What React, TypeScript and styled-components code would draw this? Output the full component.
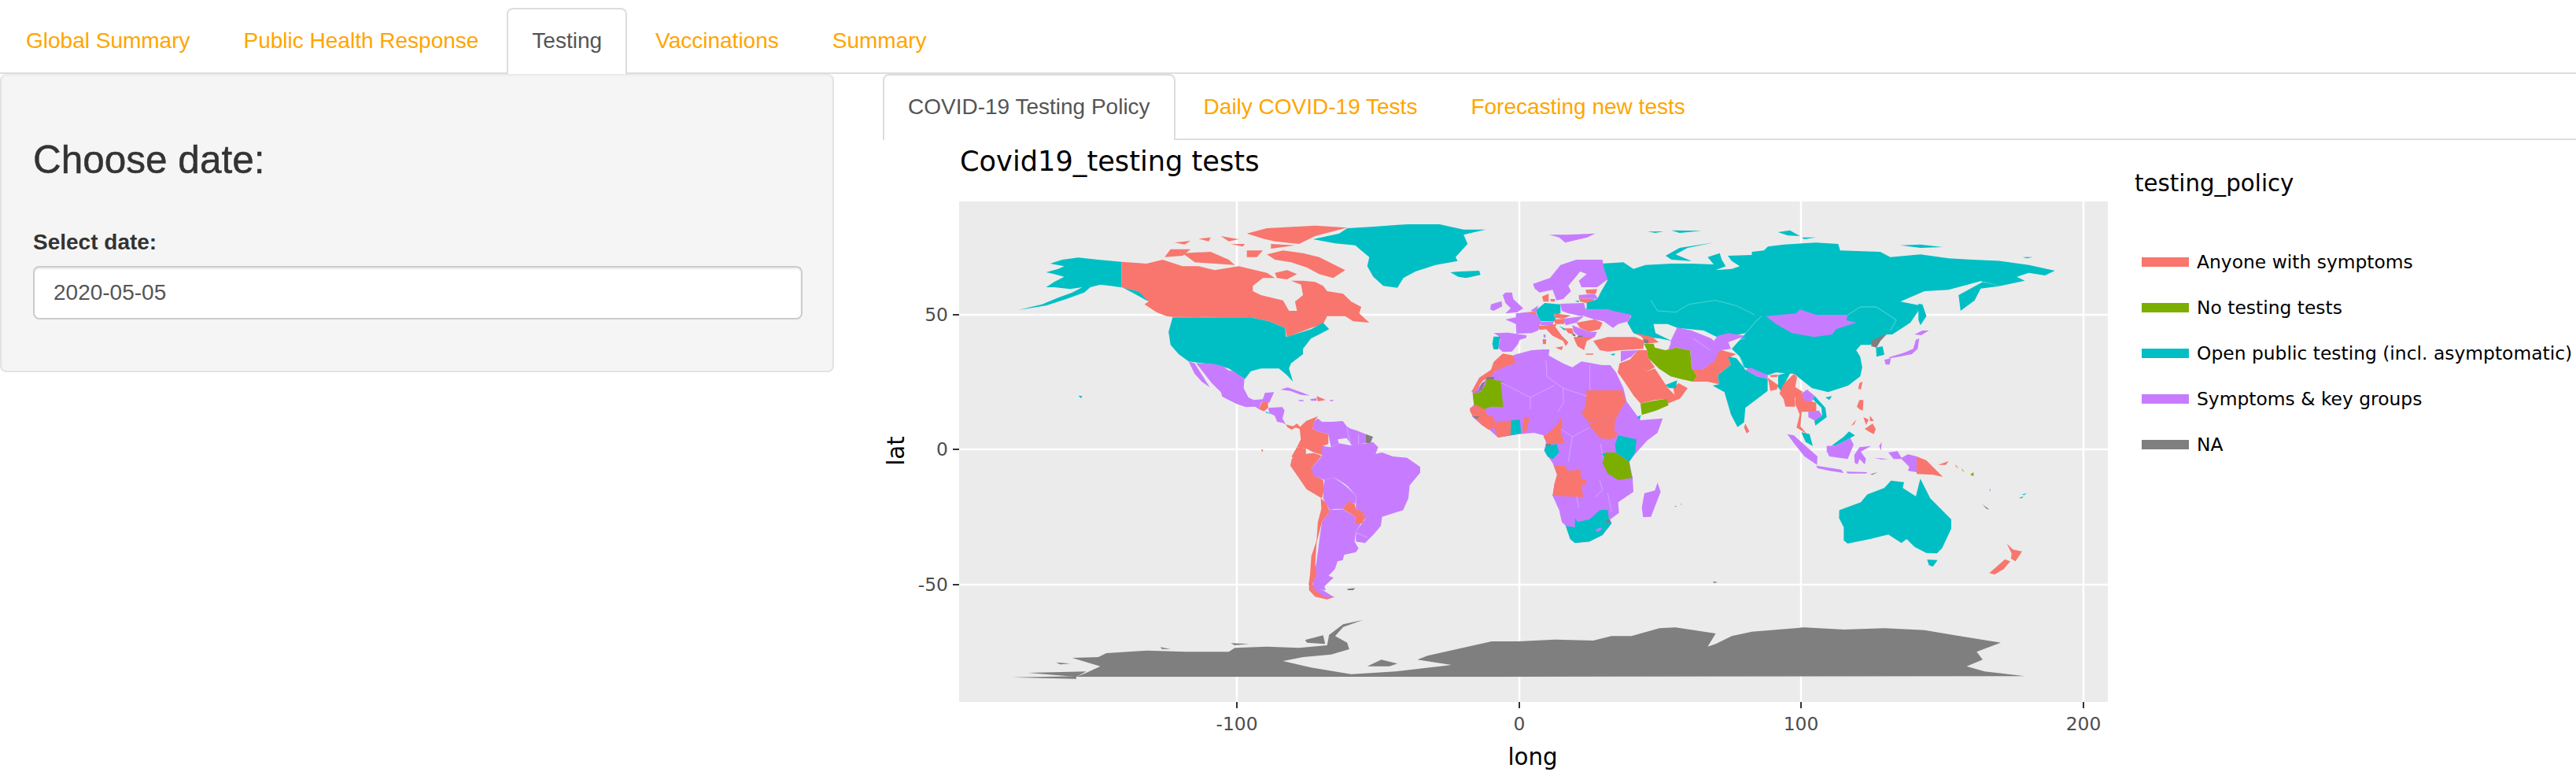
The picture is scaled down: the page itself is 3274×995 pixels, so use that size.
import React from 'react'
import styled, {createGlobalStyle} from 'styled-components'

const S = '#F8766D'
const G = '#7CAE00'
const T = '#00BFC4'
const P = '#C77CFF'
const N = '#7F7F7F'

type Shape = [string, string]

// Outlines are traced from crops of the plot, so each group keeps its crop's own coordinates
const NORTH_AMERICA: Shape[] = [
    [T, '638,698 638,796 610,790 585,785 560,795 545,815 500,840 450,865 380,882 440,860 480,835 515,815 540,795 510,802 470,795 450,795 470,775 495,755 470,745 450,738 480,725 495,715 460,705 490,690 530,682 580,690'],
    [T, '640,796 680,810 715,850 700,845 670,820'],
    [S, '638,698 700,705 740,690 790,715 830,715 870,730 930,715 1000,740 1020,760 990,760 965,790 965,810 985,825 1040,845 1055,885 1075,885 1070,850 1090,825 1085,785 1060,770 1090,770 1120,775 1140,790 1150,810 1190,820 1210,850 1235,870 1230,895 1255,930 1215,925 1195,905 1150,905 1140,935 1110,950 1050,985 1045,950 1005,925 960,910 765,908 750,905 725,890 695,860 705,850 680,810 638,796'],
    [S, '1000,670 1040,655 1090,665 1130,680 1195,730 1165,760 1130,745 1100,720 1060,700 1020,690'],
    [S, '790,665 860,660 905,690 920,710 870,705 820,700'],
    [S, '745,680 760,650 810,650 790,675'],
    [S, '950,590 1000,570 1120,560 1200,568 1120,600 1080,630 1020,620 990,610'],
    [S, '770,625 810,618 795,632'],
    [S, '830,610 860,605 855,620'],
    [S, '885,600 930,612 905,620'],
    [S, '910,630 945,630 940,640'],
    [S, '950,655 990,655 975,680 950,680'],
    [S, '1010,630 1070,635 1010,648'],
    [S, '1020,740 1050,730 1075,745 1050,765 1025,760'],
    [T, '1115,612 1180,590 1200,570 1260,565 1350,555 1430,555 1490,575 1545,575 1490,595 1500,630 1470,680 1475,695 1420,710 1370,735 1340,760 1325,797 1290,790 1265,755 1250,715 1255,680 1235,655 1220,635 1170,628'],
    [T, '765,910 960,910 1005,925 1045,950 1048,985 1110,955 1140,930 1155,955 1130,975 1110,990 1090,1030 1090,1050 1060,1085 1055,1105 1065,1155 1050,1130 1030,1105 985,1105 960,1115 945,1145 905,1105 870,1090 805,1078 780,1050 760,1015 755,965'],
    [T, '530,1208 540,1210 537,1218'],
]

const LATIN_AMERICA: Shape[] = [
    [P, '240,94 310,98 340,105 365,122 385,125 425,155 422,190 440,225 460,235 495,232 503,208 538,205 520,245 490,242 480,270 465,260 430,262 395,250 340,222 335,205 300,170 265,125'],
    [P, '212,88 235,95 270,150 293,187 262,165 235,135'],
    [S, '492,242 515,242 515,265 500,278 480,270'],
    [T, '505,278 525,287 508,284'],
    [P, '515,265 570,262 578,275 570,305 582,328 570,322 550,318 540,295 520,285'],
    [S, '582,328 610,335 625,325 645,345 635,345 620,340 605,348 590,340'],
    [P, '563,195 590,187 640,205 675,218 640,215 600,200 575,197'],
    [P, '675,232 700,228 700,238 680,238'],
    [S, '700,220 735,235 705,240'],
    [P, '630,235 650,235 650,239 635,239'],
    [P, '750,235 765,235 762,239 752,239'],
    [S, '705,297 690,320 685,345 705,355 745,365 745,402 725,410 722,445 690,435 660,420 625,415 640,385 635,340 660,315'],
    [S, '625,415 660,420 660,440 620,470 605,450'],
    [S, '625,445 660,440 690,437 720,448 680,495 695,525 725,540 730,575 720,610 662,575 600,485 605,460'],
    [P, '690,318 705,305 720,318 760,318 800,315 815,335 860,365 860,405 835,408 815,380 780,385 785,400 755,415 745,365 705,355 685,345'],
    [P, '815,340 850,350 888,365 888,398 860,405 830,405'],
    [N, '888,365 915,375 905,400 888,398'],
    [P, '722,410 755,415 785,400 830,408 890,400 915,395 935,415 925,440 950,435 990,450 1045,455 1095,490 1095,512 1055,560 1050,610 1030,655 950,680 945,715 920,745 885,780 850,775 850,735 885,690 870,660 850,650 850,600 820,565 770,530 730,540 690,525 680,495 720,450'],
    [P, '730,540 770,530 820,570 850,600 848,630 820,625 800,650 770,650 750,655 725,610'],
    [P, '720,610 748,655 800,652 848,680 845,705 880,690 850,735 845,775 860,800 850,815 805,825 800,845 780,850 770,880 745,905 765,912 730,945 735,960 682,955 700,850 720,700 750,660'],
    [S, '820,623 845,630 850,650 875,660 885,685 875,705 845,705 848,680 800,650'],
    [S, '716,610 735,625 750,660 720,700 700,780 695,860 700,900 680,945 695,960 670,940 675,900 680,830 700,770 705,700 718,650'],
    [S, '488,424 496,424 494,434'],
]

const SOUTH_TIP: Shape[] = [
    [S, '1105,540 1145,590 1170,595 1150,605 1120,595 1105,570'],
    [P, '1110,560 1140,570 1165,595 1145,597'],
    [N, '1200,565 1220,562 1215,570 1202,570'],
]

const ANTARCTICA_WEST: Shape[] = [
    [N, '525,900 550,885 585,860 515,828 580,825 600,810 700,800 800,805 905,805 920,790 1000,785 1080,790 1150,780 1155,740 1190,700 1240,683 1190,710 1170,745 1200,770 1205,795 1160,815 1090,825 1040,840 1110,865 1210,890 1320,880 1460,855 1375,835 1400,820 1560,765 1580,765 1580,900'],
    [N, '365,902 525,898 525,908'],
    [N, '405,885 550,880 525,900'],
    [N, '475,845 510,850 485,853'],
    [N, '910,772 955,775 920,780'],
    [N, '1095,760 1140,742 1145,775 1100,770'],
    [N, '1250,860 1285,835 1325,850 1305,860'],
    [N, '735,787 760,795 738,794'],
]

const ANTARCTICA_EAST: Shape[] = [
    [N, '0,765 60,765 150,758 245,762 290,745 340,745 410,715 450,712 550,735 530,785 550,775 590,745 640,728 770,712 870,720 970,715 1070,722 1140,740 1200,755 1260,770 1200,805 1215,835 1175,860 1220,880 1320,898 0,900'],
    [N, '544,536 555,540 545,543'],
]

const EURASIA: Shape[] = [
    [T, '265,705 320,700 345,725 375,710 440,705 490,705 545,708 530,680 560,665 565,690 575,715 550,730 590,725 610,715 590,695 580,675 640,672 640,660 670,655 680,640 720,632 800,625 855,630 860,655 960,660 985,680 1060,670 1130,685 1190,690 1260,695 1330,710 1395,732 1370,750 1330,740 1300,755 1320,770 1260,790 1210,772 1130,805 1070,810 1010,850 1060,865 1055,885 1035,930 990,975 975,975 935,1015 885,1015 920,1000 900,1035 910,1060 915,1100 910,1135 880,1170 830,1195 790,1180 745,1125 700,1120 680,1130 620,1100 610,1060 590,1030 625,970 560,990 520,960 455,950 430,935 395,935 400,970 440,1000 410,990 370,985 345,970 330,930 340,905 270,880 225,880 255,840 265,810 280,770 270,730'],
    [T, '425,675 460,645 545,625 480,645 450,670 490,695 440,690'],
    [T, '1155,825 1215,775 1260,790 1210,800 1195,845 1160,885'],
    [T, '1055,858 1065,860 1075,905 1060,940 1055,920'],
    [T, '380,583 420,582 400,588'],
    [T, '440,578 515,580 460,588'],
    [T, '705,585 735,578 760,600 730,598'],
    [T, '765,605 800,605 770,612'],
    [T, '1010,635 1060,632 1115,642 1060,645'],
    [T, '1315,680 1340,680 1325,685'],
    [P, '135,595 180,595 250,590 230,605 175,625 160,605'],
    [P, '675,905 750,895 760,880 800,900 880,900 875,920 900,930 850,955 840,975 795,985 740,970 700,935'],
]

const EUROPE_ASIA_AFRICA: Shape[] = [
    [T, '40,48 75,45 150,42 155,58 100,70 70,65'],
    [P, '250,125 275,125 280,150 318,185 295,200 250,205 270,185 250,165 240,135'],
    [P, '195,170 235,158 238,178 205,195 192,190'],
    [P, '355,92 420,70 460,20 520,0 620,0 625,30 640,75 600,105 540,105 530,80 560,55 535,45 490,100 500,120 470,150 445,155 430,115 380,125 362,110'],
    [S, '390,140 415,130 415,160 395,160'],
    [S, '420,150 440,150 438,160 424,160'],
    [S, '555,115 600,112 595,130 560,130'],
    [P, '530,135 590,130 605,150 530,148'],
    [S, '530,148 590,150 570,168 535,160'],
    [T, '515,158 530,155 530,163'],
    [T, '560,165 600,150 640,160 650,185 560,190'],
    [P, '460,168 550,165 560,210 540,215 490,205 465,195'],
    [P, '345,195 375,175 368,200'],
    [S, '330,200 365,198 370,212 345,208'],
    [P, '250,228 290,220 290,205 330,200 372,212 385,235 380,255 375,270 350,280 292,282 290,245'],
    [T, '370,190 400,165 460,170 460,205 435,210 445,235 385,235 368,205'],
    [S, '435,205 500,212 470,225 440,222'],
    [S, '435,228 475,225 475,245 440,245'],
    [P, '380,238 435,235 430,250 385,250'],
    [S, '375,252 410,250 445,245 440,255 465,290 490,315 480,330 470,310 430,290 405,265 380,268'],
    [S, '440,335 470,330 465,345'],
    [S, '392,303 405,303 405,322 393,322'],
    [P, '395,285 403,285 403,297 396,297'],
    [P, '225,292 205,280 260,278 330,288 330,298 305,305 298,322 275,350 240,352 222,335 230,305'],
    [T, '205,293 230,293 222,342 205,342 200,320'],
    [P, '555,190 640,188 660,195 730,210 720,235 680,245 660,260 625,235 590,228 550,215'],
    [P, '470,225 550,215 520,240 480,250'],
    [S, '520,240 590,228 620,240 610,265 570,275 535,260'],
    [P, '505,250 535,262 570,275 600,275 590,295 540,300 510,275'],
    [T, '455,252 480,265 475,270'],
    [S, '475,262 505,262 510,285 490,280'],
    [N, '505,280 517,285 517,292 507,290'],
    [N, '525,290 545,290 545,300 525,300'],
    [S, '510,295 590,295 560,310 550,345 525,330 515,310'],
    [S, '555,358 585,358 585,362 558,362'],
    [S, '585,310 640,295 745,295 780,310 775,340 690,345 640,350 610,345'],
    [T, '650,360 670,358 662,366'],
    [S, '745,280 810,295 835,315 785,320 770,295'],
    [N, '775,303 795,305 795,318 780,318'],
    [P, '690,348 755,345 730,370 690,390'],
    [S, '755,345 790,345 795,375 820,410 790,425 740,395 725,380'],
    [S, '685,395 725,380 790,425 820,415 850,460 870,490 895,515 870,530 820,535 765,548 740,520 700,460 678,430'],
    [S, '910,470 945,490 915,530 870,548 860,530 895,515 890,490'],
    [T, '860,478 905,460 900,490 875,490'],
    [G, '765,548 820,537 865,530 872,555 825,575 770,592'],
    [G, '778,320 815,320 820,335 860,345 900,335 955,345 960,410 980,445 965,465 920,455 880,445 835,415 795,375 790,345'],
    [P, '880,310 905,258 960,270 1035,300 1045,310 1060,290 1100,280 1165,290 1100,315 1110,340 1075,345 1060,380 1000,420 960,420 955,345 900,335 870,345 880,320'],
    [S, '1075,345 1130,360 1100,375 1110,400 1060,440 1065,475 1020,465 965,465 980,445 965,420 1000,420 1050,385 1060,355'],
    [T, '1100,370 1130,375 1155,405 1165,420 1210,445 1250,453 1250,500 1165,565 1160,620 1135,638 1110,590 1085,505 1040,480 1065,475 1060,440 1110,400 1100,375'],
    [T, '1290,478 1290,440 1340,425 1300,500 1285,480'],
    [S, '1165,625 1180,655 1170,662 1160,640'],
    [P, '1165,420 1185,412 1250,440 1250,453 1210,445'],
    [S, '1250,450 1290,478 1285,495 1260,500 1255,470'],
    [S, '1258,440 1290,438 1285,448 1262,447'],
    [P, '285,362 350,345 395,342 418,342 415,365 470,395 505,410 540,388 620,402 650,402 672,430 700,490 712,540 740,578 765,612 850,605 830,660 790,690 745,740 722,770 735,830 738,885 680,925 683,965 650,990 655,1005 620,1050 570,1075 515,1080 497,1065 480,1015 465,1000 455,955 430,900 437,855 447,820 430,775 398,730 405,695 395,670 360,660 300,665 222,678 185,645 160,630 125,600 115,570 130,552 125,505 210,425'],
    [S, '240,358 280,365 288,395 255,405 210,425 190,450 165,460 150,480 135,505 120,505 150,450 195,420 205,390'],
    [N, '180,447 208,447 205,458 175,458'],
    [N, '160,470 172,465 160,495 148,503 120,508 148,500'],
    [G, '178,458 208,458 248,465 232,468 242,562 195,560 170,570 130,552 125,510 155,505 175,475'],
    [S, '115,565 140,555 170,570 180,590 205,600 215,640 185,648 160,630 135,605 115,580'],
    [N, '125,597 152,597 140,607'],
    [S, '215,620 272,612 270,670 222,678 210,650'],
    [T, '272,612 305,610 310,662 270,670'],
    [S, '320,600 342,600 330,658 315,660'],
    [S, '560,498 695,498 710,540 690,570 670,610 665,625 650,600 610,625 565,618 540,585 555,560'],
    [S, '565,622 610,625 650,602 668,625 665,650 680,665 655,685 610,680 585,650'],
    [T, '752,600 767,592 762,610'],
]

const SOUTHERN_AFRICA: Shape[] = [
    [S, '460,30 468,60 460,85 475,130 410,130 395,105 425,80 455,50'],
    [N, '405,132 425,132 422,142 405,142'],
    [T, '405,142 445,132 455,165 430,190 410,180 398,155'],
    [T, '680,100 750,115 745,165 722,200 672,165 668,135'],
    [G, '630,165 670,165 722,200 730,250 735,262 680,270 640,245 620,205'],
    [T, '615,170 632,168 628,180'],
    [S, '435,215 475,215 490,235 535,230 540,268 558,268 558,288 538,290 548,335 430,330 437,285 447,250'],
    [T, '480,445 515,450 515,415 525,430 570,420 610,385 640,383 645,420 655,435 620,480 570,505 515,510 497,495'],
    [P, '595,460 612,450 618,458 600,468'],
    [N, '634,424 640,420 647,424 647,431 640,434 634,431'],
    [P, '830,280 842,315 805,410 775,412 770,375 780,320 820,310'],
    [N, '895,369 903,369 900,373'],
    [P, '917,361 923,361 920,365'],
]

const ASIA_PACIFIC: Shape[] = [
    [N, '535,38 595,13 570,40 555,65 535,60'],
    [T, '553,65 578,60 585,92 555,100'],
    [P, '585,112 610,105 605,130 590,130'],
    [P, '600,103 660,85 695,70 705,35 718,30 712,70 690,90 650,98 610,105'],
    [P, '700,15 730,0 755,0 725,18'],
    [S, '490,200 502,195 495,225 485,222'],
    [S, '490,265 505,265 503,305 490,300 480,290'],
    [S, '510,375 540,355 552,375 545,395 525,385'],
    [S, '505,330 525,340 515,360'],
    [S, '530,325 545,345 530,345'],
    [S, '458,362 478,340 470,358'],
    [T, '360,255 385,250 375,265'],
    [S, '240,165 252,178 245,215 275,235 243,255 245,290 222,290 208,290 200,260 185,240 200,205'],
    [S, '245,245 275,238 290,265 325,275 325,310 293,310 270,310 265,365 290,395 250,370 262,320 245,280'],
    [P, '270,240 290,225 320,250 308,270 280,268'],
    [P, '295,310 335,305 348,325 322,345 295,330'],
    [T, '320,250 360,295 365,330 322,362 318,345 348,325 345,295 312,262'],
    [T, '268,388 300,395 312,440 285,425'],
    [P, '215,395 240,400 330,480 328,512 280,480 240,430'],
    [P, '325,515 420,530 430,543 375,535 330,525'],
    [P, '440,538 520,540 515,545 445,545'],
    [P, '545,485 600,490 575,492'],
    [N, '530,548 560,540 540,550'],
    [P, '365,440 400,438 455,410 468,435 445,490 375,480 365,460'],
    [T, '385,438 430,405 450,385 473,400 455,410 400,438'],
    [P, '470,475 490,445 535,440 495,462 515,490 510,510 490,490 483,510 472,505'],
    [P, '565,440 575,425 572,458'],
    [P, '600,465 635,460 650,485 675,472 708,480 708,540 675,535 680,520 650,490 620,490'],
    [S, '708,480 745,495 775,525 808,558 770,550 708,547'],
    [S, '790,512 830,498 820,512'],
    [S, '855,510 868,525 858,520'],
    [G, '880,525 890,540 882,534'],
    [G, '912,550 925,540 925,555'],
    [P, '985,605 990,604 990,614'],
    [N, '958,662 985,682 975,680'],
    [T, '1098,638 1115,632 1110,640'],
    [T, '1110,625 1128,620 1118,628'],
    [T, '413,685 495,655 520,625 585,600 610,572 660,578 655,600 705,632 722,565 760,640 840,720 840,755 805,830 785,850 745,848 700,825 670,795 650,810 600,778 530,795 445,812 430,800 430,750 412,715'],
    [T, '748,873 788,875 770,900 755,895'],
    [S, '1052,812 1075,835 1110,842 1085,880 1068,870 1070,850'],
    [S, '1045,872 1065,880 1040,910 1005,930 985,925'],
]

const EUROPE_BORDERS = [
    '232,468 345,525 435,480', '345,525 345,570', '405,385 408,445 470,490', '470,490 472,545 450,580',
    '572,402 572,498', '470,490 560,520', '505,675 490,770', '612,700 625,770', '460,645 505,675 570,640',
    '610,840 620,880 590,905', '520,900 530,945', '640,890 655,960', '805,155 830,195 900,200 950,170 1050,155 1130,175 1200,210',
    '1100,315 1165,300', '965,300 1030,345', '1150,380 1165,420',
]

const SOUTH_AMERICA_BORDERS = [
    '770,535 815,560', '815,340 830,405', '860,365 860,405', '850,740 895,760', '660,420 660,440',
]

const EURASIA_BORDERS = [
    '880,900 910,870 950,870 1000,920 985,960', '665,905 650,925 625,970',
]

const Polygons = ({shapes}: { shapes: Shape[] }) => (
    <>
        {shapes.map(([fill, points], i) => <polygon key={i} fill={fill} points={points}/>)}
    </>
)

const Borders = ({lines}: { lines: string[] }) => (
    <>
        {lines.map((points, i) => <BorderLine key={i} points={points}/>)}
    </>
)

const BorderLine = styled.polyline`
    fill: none;
    stroke: #fff;
    stroke-opacity: 0.55;
    stroke-width: 1.6;
`

const WorldMap = () => (
    <g>
        <g transform="translate(1100 100) scale(.5102 .3333)">
            <Polygons shapes={NORTH_AMERICA}/>
        </g>
        <g transform="translate(1440 430) scale(.3333)">
            <Polygons shapes={LATIN_AMERICA}/>
            <Borders lines={SOUTH_AMERICA_BORDERS}/>
        </g>
        <g transform="translate(1100 560) scale(.5102 .3333)">
            <Polygons shapes={SOUTH_TIP}/>
            <Polygons shapes={ANTARCTICA_WEST}/>
        </g>
        <g transform="translate(1900 560) scale(.5102 .3333)">
            <Polygons shapes={ANTARCTICA_EAST}/>
        </g>
        <g transform="translate(1900 100) scale(.5102 .3333)">
            <Polygons shapes={EURASIA}/>
            <Borders lines={EURASIA_BORDERS}/>
        </g>
        <g transform="translate(1830 330) scale(.3333)">
            <Polygons shapes={EUROPE_ASIA_AFRICA}/>
            <Borders lines={EUROPE_BORDERS}/>
        </g>
        <g transform="translate(1830 520) scale(.3333)">
            <Polygons shapes={SOUTHERN_AFRICA}/>
        </g>
        <g transform="translate(2200 420) scale(.3333)">
            <Polygons shapes={ASIA_PACIFIC}/>
        </g>
    </g>
)

const X_TICKS = [[1572, '-100'], [1931, '0'], [2289, '100'], [2648, '200']] as const
const Y_TICKS = [[400, '50'], [571, '0'], [743, '-50']] as const
const LEGEND = [
    [S, 'Anyone with symptoms'],
    [G, 'No testing tests'],
    [T, 'Open public testing (incl. asymptomatic)'],
    [P, 'Symptoms & key groups'],
    [N, 'NA'],
] as const

const Plot = () => (
    <PlotSvg viewBox="1122 178 2152 817">
        <PlotTitle x={1220} y={217}>Covid19_testing tests</PlotTitle>
        <rect x={1219} y={256} width={1460} height={636} fill="#EBEBEB"/>
        {X_TICKS.map(([x]) => <GridLine key={x} x1={x} x2={x} y1={256} y2={892}/>)}
        {Y_TICKS.map(([y]) => <GridLine key={y} x1={1219} x2={2679} y1={y} y2={y}/>)}
        <WorldMap/>
        {X_TICKS.map(([x, label]) => (
            <g key={label}>
                <TickMark x1={x} x2={x} y1={892} y2={900}/>
                <AxisText x={x} y={928} textAnchor="middle">{label}</AxisText>
            </g>
        ))}
        {Y_TICKS.map(([y, label]) => (
            <g key={label}>
                <TickMark x1={1211} x2={1219} y1={y} y2={y}/>
                <AxisText x={1205} y={y + 8} textAnchor="end">{label}</AxisText>
            </g>
        ))}
        <AxisTitle x={1948} y={972} textAnchor="middle">long</AxisTitle>
        <AxisTitle x={1149} y={573} textAnchor="middle" transform="rotate(-90 1149 573)">lat</AxisTitle>
        <AxisTitle x={2713} y={243}>testing_policy</AxisTitle>
        {LEGEND.map(([fill, label], i) => (
            <g key={label}>
                <rect x={2722} y={327 + i * 58} width={60} height={12} fill={fill}/>
                <LegendText x={2792} y={341 + i * 58}>{label}</LegendText>
            </g>
        ))}
    </PlotSvg>
)

const App = () => (
    <>
        <GlobalStyle/>
        <TabBar>
            <Tab>Global Summary</Tab>
            <Tab>Public Health Response</Tab>
            <Tab $active>Testing</Tab>
            <Tab>Vaccinations</Tab>
            <Tab>Summary</Tab>
        </TabBar>
        <Layout>
            <Sidebar>
                <Heading>Choose date:</Heading>
                <FieldLabel htmlFor="date">Select date:</FieldLabel>
                <DateInput id="date" readOnly value="2020-05-05"/>
            </Sidebar>
            <Main>
                <SubTabBar>
                    <Tab $active>COVID-19 Testing Policy</Tab>
                    <Tab>Daily COVID-19 Tests</Tab>
                    <Tab>Forecasting new tests</Tab>
                </SubTabBar>
                <Plot/>
            </Main>
        </Layout>
    </>
)

const GlobalStyle = createGlobalStyle`
    html, body {
        margin: 0;
        background: #fff;
    }

    body {
        font-family: "Liberation Sans", Arial, sans-serif;
        font-size: 28px;
        line-height: 40px;
        color: #333;
        overflow: hidden;
    }
`

const TabBar = styled.nav`
    display: flex;
    gap: 4px;
    height: 82px;
    margin-top: 10px;
    padding-left: 1px;
    border-bottom: 2px solid #ddd;
`

const SubTabBar = styled(TabBar)`
    margin-top: 0;
    padding-left: 0;
`

const Tab = styled.a<{ $active?: boolean }>`
    height: 84px;
    padding: 20px 30px;
    box-sizing: border-box;
    border: 2px solid ${(props) => (props.$active ? '#ddd' : 'transparent')};
    border-bottom: 0;
    border-radius: 8px 8px 0 0;
    background: ${(props) => (props.$active ? '#fff' : 'transparent')};
    color: ${(props) => (props.$active ? '#555' : 'orange')};
    white-space: nowrap;
`

const Layout = styled.div`
    display: flex;
    align-items: flex-start;
`

const Sidebar = styled.aside`
    flex: 0 0 1060px;
    box-sizing: border-box;
    height: 379px;
    padding: 40px 38px 0 40px;
    background: #f5f5f5;
    border: 2px solid #e3e3e3;
    border-top: 0;
    border-radius: 8px;
    box-shadow: inset 0 2px 2px rgba(0, 0, 0, .05);
`

const Heading = styled.h3`
    margin: 42px 0 59px;
    font-size: 49.5px;
    font-weight: 400;
    line-height: 53px;
    -webkit-text-stroke: .5px #333;
`

const FieldLabel = styled.label`
    display: block;
    font-weight: 700;
    margin-bottom: 10px;
`

const DateInput = styled.input`
    display: block;
    width: 100%;
    height: 68px;
    box-sizing: border-box;
    padding: 12px 24px;
    border: 2px solid #ccc;
    border-radius: 8px;
    background: #fff;
    box-shadow: inset 0 2px 2px rgba(0, 0, 0, .075);
    font: inherit;
    color: #555;
    outline: none;
`

const Main = styled.main`
    flex: 1;
    min-width: 0;
    margin-left: 62px;
`

const PlotSvg = styled.svg`
    display: block;
    width: 2152px;
    height: 817px;
    font-family: "DejaVu Sans", sans-serif;
`

const PlotTitle = styled.text`
    font-size: 35.2px;
    fill: #000;
`

const AxisTitle = styled.text`
    font-size: 29.3px;
    fill: #000;
`

const AxisText = styled.text`
    font-size: 23.4px;
    fill: #4d4d4d;
`

const LegendText = styled.text`
    font-size: 23.4px;
    fill: #000;
`

const GridLine = styled.line`
    stroke: #fff;
    stroke-width: 2.5;
`

const TickMark = styled.line`
    stroke: #333;
    stroke-width: 2;
`

export default App
